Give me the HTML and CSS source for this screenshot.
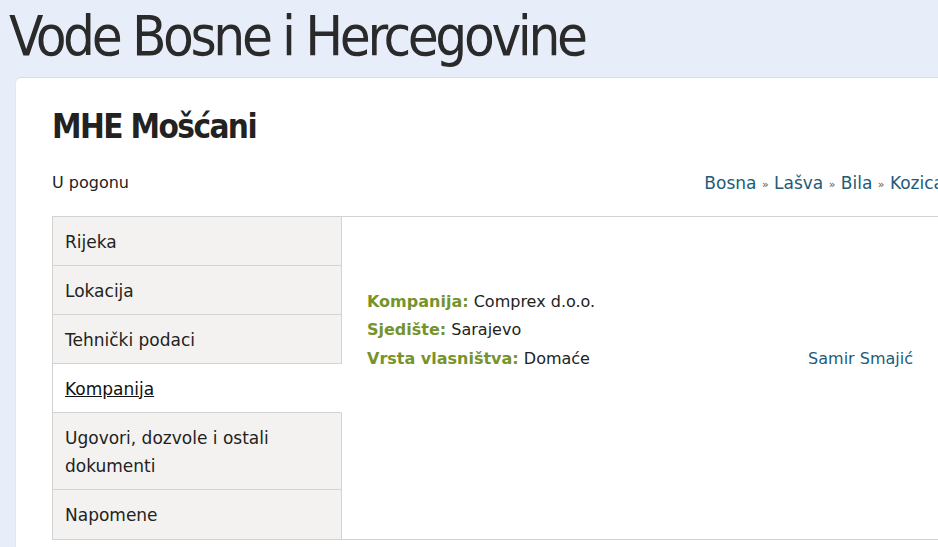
FILE: index.html
```html
<!DOCTYPE html>
<html lang="bs">
<head>
  <meta charset="UTF-8" />
  <meta name="viewport" content="width=device-width, initial-scale=1.0" />
  <title>MHE Mošćani - Vode Bosne i Hercegovine</title>
  <link rel="stylesheet" href="styles.css">
</head>
<body>

<div class="page">
  <h1 class="site-title">Vode Bosne i Hercegovine</h1>

  <div class="card">
    <h2 class="plant-name">MHE Mošćani</h2>

    <div class="status-row">
      <span class="status">U pogonu</span>
      <div class="breadcrumb">
        <a href="#">Bosna</a> <span class="sep">»</span>
        <a href="#">Lašva</a> <span class="sep">»</span>
        <a href="#">Bila</a> <span class="sep">»</span>
        <a href="#">Kozica</a>
      </div>
    </div>

    <div class="tabs">
      <ul class="tab-list">
        <li><a href="#">Rijeka</a></li>
        <li><a href="#">Lokacija</a></li>
        <li><a href="#">Tehnički podaci</a></li>
        <li class="active"><a href="#">Kompanija</a></li>
        <li><a href="#">Ugovori, dozvole i ostali dokumenti</a></li>
        <li><a href="#">Napomene</a></li>
      </ul>

      <div class="tab-panel">
        <div class="company-info">
          <div><span class="label">Kompanija:</span> Comprex d.o.o.</div>
          <div><span class="label">Sjedište:</span> Sarajevo</div>
          <div><span class="label">Vrsta vlasništva:</span> Domaće</div>
        </div>
        <a class="author" href="#">Samir Smajić</a>
      </div>
    </div>
  </div>
</div>

</body>
</html>
```

FILE: styles.css
```css
html, body {
  overflow: hidden;
}

body {
  margin: 0;
  background: #e7eefa;
  color: #222;
  font-family: "DejaVu Sans", Verdana, sans-serif;
  font-size: 16px;
}

a {
  color: #1d5b79;
  text-decoration: none;
}

.page {
  width: 981px;
}

.site-title {
  margin: 0;
  padding: 3px 0 0 9px;
  font-family: "DejaVu Sans Condensed", "DejaVu Sans", sans-serif;
  font-size: 56px;
  font-weight: normal;
  letter-spacing: -3.4px;
  line-height: 1.164;
  color: #2a2a2a;
}

.card {
  margin: 9px 0 0 15px;
  padding: 30px 37px 40px 36px;
  background: #fff;
  border-top: 1px solid #d9dee6;
  border-left: 1px solid #e3e8ef;
  border-radius: 6px 0 0 0;
}

.plant-name {
  margin: 0;
  font-family: "DejaVu Sans Condensed", "DejaVu Sans", sans-serif;
  font-size: 33px;
  font-weight: bold;
  letter-spacing: -1.6px;
  line-height: 1.164;
  color: #222;
}

.status-row {
  display: flex;
  justify-content: space-between;
  margin-top: 22px;
  line-height: 28px;
}

.breadcrumb {
  font-size: 17px;
}

.breadcrumb .sep {
  color: #555;
  font-size: 11px;
  vertical-align: 1px;
}

.tabs {
  display: flex;
  margin-top: 17px;
  border-top: 1px solid #d3d3d3;
  border-bottom: 1px solid #d3d3d3;
  border-left: 1px solid #d3d3d3;
}

.tab-list {
  list-style: none;
  margin: 0;
  padding: 0;
  width: 289px;
  flex-shrink: 0;
}

.tab-list li {
  background: #f3f2f0;
  border-right: 1px solid #d3d3d3;
  border-bottom: 1px solid #d3d3d3;
  padding: 11px 12px 9px;
  font-size: 17px;
  line-height: 28px;
}

.tab-list li:last-child {
  border-bottom: none;
  padding-bottom: 10px;
}

.tab-list li a {
  color: #222;
}

.tab-list li.active {
  background: #fff;
  border-right-color: #fff;
}

.tab-list li.active a {
  color: #111;
  text-decoration: underline;
}

.tab-panel {
  flex: 1;
  display: flex;
  justify-content: space-between;
  align-items: flex-start;
  padding: 71px 31px 0 25px;
  line-height: 28.5px;
}

.company-info {
  color: #222;
}

.label {
  color: #76932c;
  font-weight: bold;
}

.author {
  margin-top: 57px;
}
```
